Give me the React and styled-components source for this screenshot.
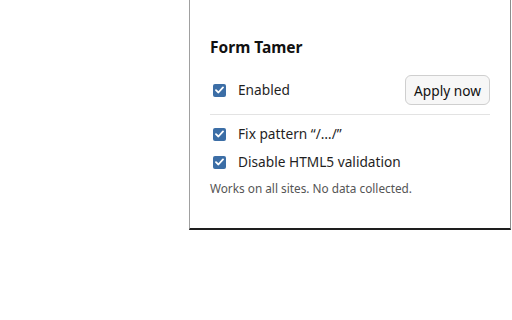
import { createGlobalStyle } from "styled-components";
import styled from "styled-components";

const GlobalStyle = createGlobalStyle`
  html, body {
    margin: 0;
    padding: 0;
    background: #ffffff;
  }
  body {
    font-family: "Noto Sans", "Open Sans", sans-serif;
    color: #1a1a1a;
  }
`;

const options = [
  { id: "pattern", label: "Fix pattern “/…/”" },
  { id: "html5", label: "Disable HTML5 validation" },
];

const App = () => {
  return (
    <Page>
      <GlobalStyle />
      <Popup>
        <Title>Form Tamer</Title>

        <TopRow>
          <CheckRow>
            <Box />
            <span>Enabled</span>
          </CheckRow>
          <ApplyButton>Apply now</ApplyButton>
        </TopRow>

        <Divider />

        {/* per-site fixes */}
        <OptionList>
          {options.map((opt) => {
            return (
              <CheckRow key={opt.id}>
                <Box />
                <span>{opt.label}</span>
              </CheckRow>
            );
          })}
        </OptionList>

        <Note>Works on all sites. No data collected.</Note>
      </Popup>
    </Page>
  );
};

const Box = () => (
  <StyledBox>
    <svg width="9" height="8" viewBox="0 0 9 8">
      <path
        d="M1 4.2 L3.4 6.5 L8 1.4"
        fill="none"
        stroke="#ffffff"
        strokeWidth="1.8"
        strokeLinecap="round"
        strokeLinejoin="round"
      />
    </svg>
  </StyledBox>
);

const Page = styled.div`
  display: flex;
  padding-left: 189px;
  width: 512px;
  height: 320px;
  box-sizing: border-box;
`;

const Popup = styled.div`
  width: 322px;
  height: 230px;
  box-sizing: border-box;
  border-left: 1px solid #a0a0a0;
  border-right: 1px solid #8c8c8c;
  border-bottom: 2px solid #1e1e1e;
  padding: 37px 20px 0 20px;
  display: flex;
  flex-direction: column;
`;

const Title = styled.h1`
  margin: 0;
  font-size: 15.5px;
  line-height: 21px;
  font-weight: 700;
  color: #111;
`;

const TopRow = styled.div`
  margin-top: 17px;
  display: flex;
  align-items: center;
  justify-content: space-between;
  height: 30px;
`;

const CheckRow = styled.label`
  display: flex;
  align-items: center;
  gap: 12px;
  padding-left: 3px;
  font-size: 13.7px;
  line-height: 20px;
  color: #1f1f1f;
`;

const StyledBox = styled.span`
  width: 13px;
  height: 13px;
  border-radius: 2px;
  background: #3c6ea6;
  display: flex;
  align-items: center;
  justify-content: center;
  flex-shrink: 0;
`;

const ApplyButton = styled.button`
  font-family: inherit;
  font-size: 13.7px;
  height: 30px;
  padding: 0 8px;
  border: 1px solid #cfcfcf;
  border-radius: 6px;
  background: #f7f7f7;
  color: #111;
`;

const Divider = styled.hr`
  margin: 9px 0 0 0;
  border: none;
  border-top: 1px solid #e3e3e3;
`;

const OptionList = styled.div`
  margin-top: 9px;
  display: flex;
  flex-direction: column;
  gap: 8px;
`;

const Note = styled.p`
  margin: 8px 0 0 0;
  font-size: 11.8px;
  line-height: 16px;
  color: #555;
`;

export default App;
